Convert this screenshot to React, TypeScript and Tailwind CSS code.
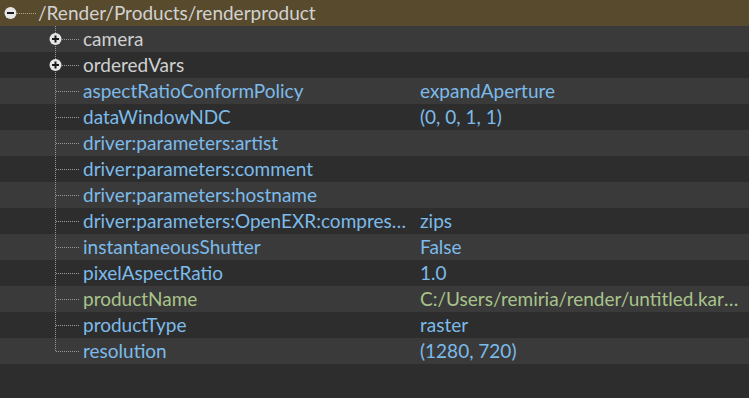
import React from 'react';

type Row = {
  name: string;
  value?: string;
  kind: 'group' | 'attr' | 'rel';
};

const rows: Row[] = [
  { name: 'camera', kind: 'group' },
  { name: 'orderedVars', kind: 'group' },
  { name: 'aspectRatioConformPolicy', value: 'expandAperture', kind: 'attr' },
  { name: 'dataWindowNDC', value: '(0, 0, 1, 1)', kind: 'attr' },
  { name: 'driver:parameters:artist', kind: 'attr' },
  { name: 'driver:parameters:comment', kind: 'attr' },
  { name: 'driver:parameters:hostname', kind: 'attr' },
  { name: 'driver:parameters:OpenEXR:compression', value: 'zips', kind: 'attr' },
  { name: 'instantaneousShutter', value: 'False', kind: 'attr' },
  { name: 'pixelAspectRatio', value: '1.0', kind: 'attr' },
  { name: 'productName', value: 'C:/Users/remiria/render/untitled.karma.exr', kind: 'rel' },
  { name: 'productType', value: 'raster', kind: 'attr' },
  { name: 'resolution', value: '(1280, 720)', kind: 'attr' },
];

function Toggle({ cx, open }: { cx: number; open: boolean }) {
  return (
    <g>
      <circle cx={cx} cy={13} r={6} fill="#e6e6e6" />
      <line x1={cx - 3.5} y1={13} x2={cx + 3.5} y2={13} stroke="#1a1a1a" strokeWidth={2} />
      {!open && <line x1={cx} y1={9.5} x2={cx} y2={16.5} stroke="#1a1a1a" strokeWidth={2} />}
    </g>
  );
}

function Branch({ group, last }: { group: boolean; last: boolean }) {
  return (
    <svg width="83" height="26" className="shrink-0">
      <line x1={55.5} y1={0} x2={55.5} y2={last ? 13.5 : 26} stroke="#9a9a9a" strokeDasharray="1 1" />
      {group ? (
        <>
          <line x1={62} y1={13.5} x2={79} y2={13.5} stroke="#9a9a9a" strokeDasharray="1 1" />
          <Toggle cx={55.5} open={false} />
        </>
      ) : (
        <line x1={56} y1={13.5} x2={79} y2={13.5} stroke="#9a9a9a" strokeDasharray="1 1" />
      )}
    </svg>
  );
}

export default function App() {
  return (
    <div
      className="w-[749px] h-[398px] bg-[#2d2d2d] overflow-hidden text-[19px] leading-[26px]"
      style={{ fontFamily: 'Lato, "Noto Sans", sans-serif' }}
    >
      <div className="flex h-[26px] items-center bg-[#584a2c] text-[#d2d2d2]">
        <svg width="38" height="26" className="shrink-0">
          <line x1={17} y1={13.5} x2={36} y2={13.5} stroke="#b0a58c" strokeDasharray="1 1" />
          <Toggle cx={10.5} open />
        </svg>
        <span>/Render/Products/renderproduct</span>
      </div>
      {rows.map((r, i) => {
        const color = r.kind === 'group' ? 'text-[#d0d0d0]' : r.kind === 'rel' ? 'text-[#a9c48b]' : 'text-[#7cbbea]';
        return (
          <div key={r.name} className={`flex h-[26px] items-center ${i % 2 === 0 ? 'bg-[#3a3a3a]' : 'bg-[#2d2d2d]'}`}>
            <Branch group={r.kind === 'group'} last={i === rows.length - 1} />
            <div className={`w-[337px] shrink-0 pr-[10px] truncate ${color}`}>{r.name}</div>
            {r.value && <div className={`w-[322px] truncate ${color}`}>{r.value}</div>}
          </div>
        );
      })}
    </div>
  );
}
